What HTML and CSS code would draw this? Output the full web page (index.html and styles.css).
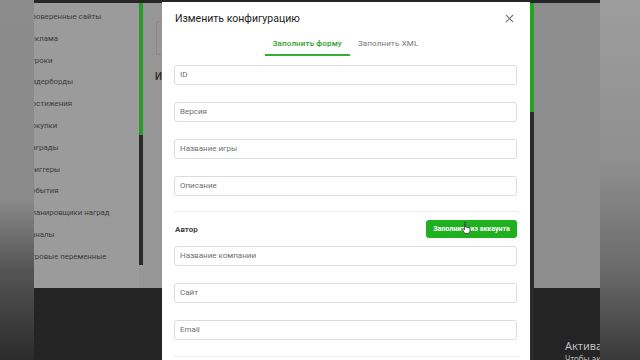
FILE: index.html
```html
<!DOCTYPE html>
<html lang="ru">
<head>
    <meta charset="UTF-8">
    <meta name="viewport" content="width=device-width, initial-scale=1.0">
    <title>Изменить конфигурацию</title>
    <link rel="stylesheet" href="styles.css">
</head>
<body>
    <div class="scene">
        <div class="edge-left"></div>

        <div class="app">
            <div class="app-top"></div>
            <div class="app-main">
                <nav class="sidebar">
                    <ul>
                        <li>Проверенные сайты</li>
                        <li>Реклама</li>
                        <li>Игроки</li>
                        <li>Лидерборды</li>
                        <li>Достижения</li>
                        <li>Покупки</li>
                        <li>Награды</li>
                        <li>Триггеры</li>
                        <li>События</li>
                        <li>Планировщики наград</li>
                        <li>Каналы</li>
                        <li>Игровые переменные</li>
                    </ul>
                </nav>
                <div class="side-scroll"><span class="thumb"></span></div>
                <div class="content">
                    <div class="content-peek">
                        <div class="content-box"></div>
                        <h2 class="content-title">И</h2>
                    </div>
                </div>
                <div class="modal-scroll"><span class="thumb"></span></div>
                <div class="rest"></div>
            </div>
            <div class="app-foot">
                <div class="foot-left"></div>
                <div class="foot-right">
                    <div class="watermark">
                        <div class="wm-title">Активация Windows</div>
                        <div class="wm-text">Чтобы активировать Windows</div>
                    </div>
                </div>
            </div>
        </div>

        <div class="edge-right"></div>

        <div class="modal">
            <div class="modal-header">
                <h1>Изменить конфигурацию</h1>
                <button class="close-btn" aria-label="Закрыть">
                    <svg width="9" height="9" viewBox="0 0 9 9">
                        <path d="M1 1L8 8M8 1L1 8" stroke="#777" stroke-width="1.1" fill="none"/>
                    </svg>
                </button>
            </div>

            <div class="tabs">
                <span class="tab active">Заполнить форму</span>
                <span class="tab">Заполнить XML</span>
            </div>

            <div class="form">
                <div class="field">ID</div>
                <div class="field">Версия</div>
                <div class="field">Название игры</div>
                <div class="field">Описание</div>

                <div class="divider"></div>

                <div class="section-row">
                    <span class="section-title">Автор</span>
                    <button class="fill-btn">Заполнить из аккаунта</button>
                </div>

                <div class="field">Название компании</div>
                <div class="field">Сайт</div>
                <div class="field">Email</div>

                <div class="divider"></div>
            </div>
        </div>

        <svg class="cursor" width="9" height="12" viewBox="0 0 9 12">
            <path d="M2.5 0.5c.6 0 1 .4 1 1V5l.4-.1c.5 0 .9.3 1 .7.3-.2.8-.2 1.1.1.3-.1.8 0 1 .3.5 0 1 .4 1 1V9c0 1.5-1 2.5-2.5 2.5H4c-.8 0-1.4-.4-1.8-1L.6 7.8c-.3-.5 0-1 .5-1.1.3 0 .6.1.8.3l.6.7V1.5c0-.6.4-1 1-1z" fill="#fff" stroke="#222" stroke-width=".7"/>
        </svg>
    </div>
</body>
</html>
```

FILE: styles.css
```css
* {
    margin: 0;
    padding: 0;
    box-sizing: border-box;
}

body {
    font-family: Roboto, "Noto Sans", sans-serif;
    background: #222;
    overflow: hidden;
}

.scene {
    position: relative;
    width: 640px;
    height: 360px;
    display: flex;
    overflow: hidden;
}

.edge-left {
    width: 34px;
    background: linear-gradient(180deg, #8c8c8c 0%, #8a8a8a 55%, #555 75%, #2b2b2b 100%);
}

.edge-right {
    width: 40px;
    background: linear-gradient(180deg, #9d9d9d 0%, #8f8f8f 45%, #6a6a6a 75%, #3a3a3a 100%);
}

.app {
    width: 566px;
    display: flex;
    flex-direction: column;
}

.app-top {
    height: 3px;
    background: #262626;
}

.app-main {
    height: 285px;
    display: flex;
    background: #989898;
}

.sidebar {
    width: 105px;
    overflow: hidden;
    background: #9b9b9b;
}

.sidebar ul {
    list-style: none;
    margin-left: -8px;
    padding-top: 7px;
    white-space: nowrap;
}

.sidebar li {
    height: 21.8px;
    line-height: 14px;
    font-size: 7.8px;
    color: #3b3b3b;
}

.side-scroll {
    width: 4px;
    height: 262px;
    background: #2a2a2a;
}

.side-scroll .thumb {
    display: block;
    height: 132px;
    background: #2a9a2a;
}

.content {
    flex: 1;
    background: #969696;
}

.content-peek {
    width: 19px;
    padding: 18px 0 0 12px;
}

.content-box {
    width: 7px;
    height: 34px;
    border: 1px solid #8a8a8a;
    border-right: none;
    margin-left: 1px;
}

.content-title {
    margin-top: 16px;
    font-size: 10px;
    font-weight: 500;
    color: #2a2a2a;
}

.modal-scroll {
    width: 4px;
    background: #2b2b2b;
}

.modal-scroll .thumb {
    display: block;
    height: 109px;
    background: #22a322;
}

.rest {
    width: 66px;
    background: #8e8e8e;
}

.app-foot {
    flex: 1;
    display: flex;
    background: #242424;
}

.foot-left {
    width: 496px;
}

.foot-right {
    flex: 1;
    border-left: 4px solid #2b2b2b;
    overflow: hidden;
    display: flex;
    align-items: flex-end;
    padding-left: 31px;
}

.watermark {
    white-space: nowrap;
    color: #bdbdbd;
    font-family: "Noto Sans", sans-serif;
    margin-bottom: -4px;
}

.wm-title {
    font-size: 11px;
    line-height: 14px;
}

.wm-text {
    font-size: 8px;
    line-height: 11px;
}

/* modal */

.modal {
    position: absolute;
    left: 162px;
    top: 2px;
    width: 368px;
    height: 370px;
    background: #fff;
    padding: 0 13px 0 12px;
}

.modal-header {
    height: 32px;
    display: flex;
    align-items: center;
    justify-content: space-between;
    padding-left: 1px;
}

.modal-header h1 {
    font-size: 10.5px;
    font-weight: 400;
    color: #222;
}

.close-btn {
    background: none;
    border: none;
    width: 12px;
    height: 12px;
    display: flex;
    align-items: center;
    justify-content: center;
    margin-right: 2px;
}

.tabs {
    display: flex;
    justify-content: center;
    height: 22px;
}

.tab {
    font-size: 8px;
    letter-spacing: 0.15px;
    color: #777;
    padding: 5px 8px 0;
    border-bottom: 2px solid transparent;
}

.tab.active {
    color: #2da02d;
    font-weight: 500;
    border-bottom-color: #33b033;
}

.form {
    padding-top: 9px;
    display: flex;
    flex-direction: column;
}

.field {
    height: 20px;
    border: 1px solid #dcdcdc;
    border-radius: 3px;
    font-size: 8px;
    line-height: 18px;
    color: #6f6f6f;
    padding-left: 5px;
    margin-bottom: 17px;
}

.form > .field:nth-child(4) {
    margin-bottom: 15px;
}

.divider {
    height: 1px;
    background: #eeeeee;
    margin: 0 -1px 8px;
}

.section-row {
    display: flex;
    align-items: center;
    justify-content: space-between;
    height: 18px;
    margin-bottom: 8px;
}

.section-title {
    font-size: 8px;
    font-weight: 700;
    color: #444;
    padding-left: 1px;
}

.fill-btn {
    width: 91px;
    height: 18px;
    border: none;
    border-radius: 3px;
    background: #1fb01f;
    color: #fff;
    font-family: Roboto, sans-serif;
    font-size: 7px;
    font-weight: 700;
}

.form > .field:nth-child(9) {
    margin-bottom: 16px;
}

.cursor {
    position: absolute;
    left: 462px;
    top: 222px;
}
```
